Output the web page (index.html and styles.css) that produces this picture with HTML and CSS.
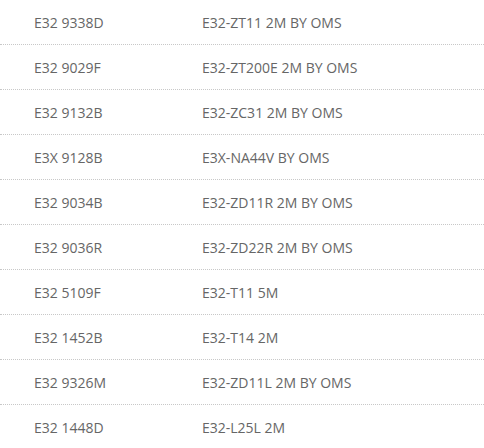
FILE: index.html
```html
<!DOCTYPE html>
<html>
<head>
<meta charset="utf-8">
<link rel="stylesheet" href="styles.css">
</head>
<body>
<div class="list">
  <div class="row"><span class="code">E32 9338D</span><span class="name">E32-ZT11 2M BY OMS</span></div>
  <div class="row"><span class="code">E32 9029F</span><span class="name">E32-ZT200E 2M BY OMS</span></div>
  <div class="row"><span class="code">E32 9132B</span><span class="name">E32-ZC31 2M BY OMS</span></div>
  <div class="row"><span class="code">E3X 9128B</span><span class="name">E3X-NA44V BY OMS</span></div>
  <div class="row"><span class="code">E32 9034B</span><span class="name">E32-ZD11R 2M BY OMS</span></div>
  <div class="row"><span class="code">E32 9036R</span><span class="name">E32-ZD22R 2M BY OMS</span></div>
  <div class="row"><span class="code">E32 5109F</span><span class="name">E32-T11 5M</span></div>
  <div class="row"><span class="code">E32 1452B</span><span class="name">E32-T14 2M</span></div>
  <div class="row"><span class="code">E32 9326M</span><span class="name">E32-ZD11L 2M BY OMS</span></div>
  <div class="row"><span class="code">E32 1448D</span><span class="name">E32-L25L 2M</span></div>
</div>
</body>
</html>
```
FILE: styles.css
```css
html, body {
  margin: 0;
  padding: 0;
  background: #fff;
}
.list {
  font-family: "Open Sans", "Noto Sans", sans-serif;
  font-size: 14px;
  color: #666;
}
.row {
  display: flex;
  align-items: center;
  height: 44px;
  border-bottom: 1px dotted #c8c8c8;
  padding-left: 34px;
}
.code {
  width: 168px;
  flex: none;
}
.name {
  flex: 1;
}
```
